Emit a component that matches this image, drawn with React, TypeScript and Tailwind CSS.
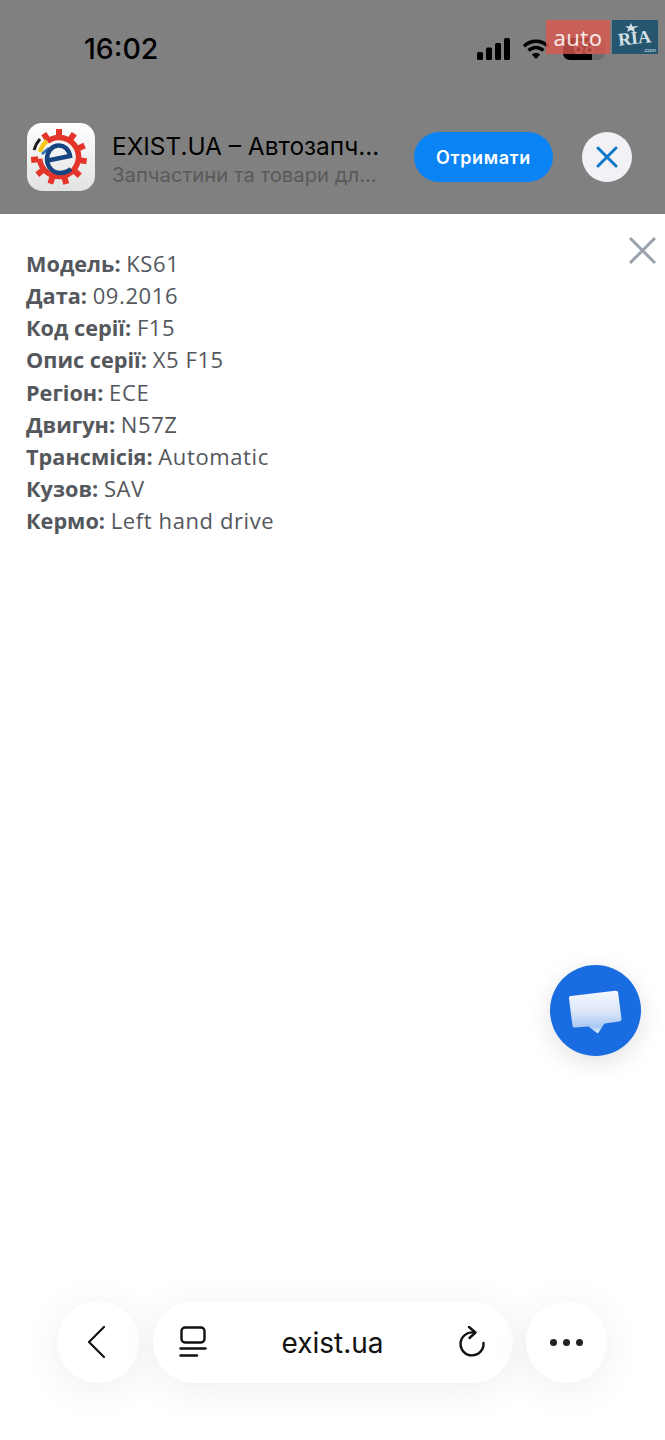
import React from "react";

const specs: [string, string][] = [
  ["Модель:", "KS61"],
  ["Дата:", "09.2016"],
  ["Код серії:", "F15"],
  ["Опис серії:", "X5 F15"],
  ["Регіон:", "ECE"],
  ["Двигун:", "N57Z"],
  ["Трансмісія:", "Automatic"],
  ["Кузов:", "SAV"],
  ["Кермо:", "Left hand drive"],
];

const gearTeeth = [-33, 0, 33, 66, 99, 132, 165, 198, 231, 264];

const AppIcon = () => (
  <div className="w-[68px] h-[68px] rounded-[15px] bg-gradient-to-b from-white to-[#e2e2e2] shrink-0">
    <svg width="68" height="68" viewBox="0 0 68 68" fill="none">
      {/* gear ring, open at the upper left */}
      <path d="M20.3 18.4 A19.5 19.5 0 1 1 12.6 35.7" stroke="#e4352b" strokeWidth="5.5" />
      {gearTeeth.map((a) => (
        <rect key={a} x="29" y="6" width="6" height="7" fill="#e4352b" transform={`rotate(${a} 32 34)`} />
      ))}
      <path d="M7 27 A26 26 0 0 1 13 16" stroke="#1c1c1c" strokeWidth="3" />
      <path d="M13 29 A22 22 0 0 1 20 18" stroke="#f2c81e" strokeWidth="4.5" />
      <path d="M15 31 L22 25" stroke="#2a6fb5" strokeWidth="2.5" />
      {/* the blue "e" mark */}
      <path
        d="M21 37.5 L43 33 C42 26 37 22 31 22.5 C24.5 23 20 29 20 36 C20 44 26 50 33 50 C37 50 41 48.5 44 46"
        stroke="#17457f"
        strokeWidth="4.5"
      />
    </svg>
  </div>
);

const StatusIcons = () => (
  <div className="flex items-center">
    <svg width="34" height="22" viewBox="0 0 34 22" fill="#000">
      <rect x="0" y="14" width="6" height="8" rx="1.5" />
      <rect x="9" y="9.5" width="6" height="12.5" rx="1.5" />
      <rect x="18" y="5" width="6" height="17" rx="1.5" />
      <rect x="27" y="0" width="6" height="22" rx="1.5" />
    </svg>
    <svg className="ml-[11px]" width="28" height="22" viewBox="0 0 28 22" fill="none" stroke="#000" strokeWidth="3.4">
      <path d="M2 8.2 C9 1.5 19 1.5 26 8.2" />
      <path d="M6.5 12.6 C11 8.5 17 8.5 21.5 12.6" />
      <path d="M14 21 L9.8 16.6 C12 14.6 16 14.6 18.2 16.6 Z" fill="#000" stroke="none" />
    </svg>
    <div className="relative ml-[13px] w-[42px] h-[22px] rounded-[7px] bg-[#6c6c6c] overflow-hidden flex items-center justify-center">
      <div className="absolute left-0 top-0 bottom-0 w-[29px] bg-black" />
      <span className="relative font-['Inter',sans-serif] font-semibold text-[17px] text-[#8a8a8a]">68</span>
    </div>
  </div>
);

const Watermark = () => (
  <div className="absolute left-[546px] top-[20px] flex gap-[2px]">
    <div className="w-[64px] h-[34px] bg-[#d9574e]/80 flex items-center justify-center font-['Noto_Sans',sans-serif] text-[22px] tracking-[0.4px] text-white/85">
      auto
    </div>
    <div className="relative w-[46px] h-[34px] bg-[#26566f] flex items-center justify-center font-['Liberation_Serif',serif] font-bold text-[18px] text-[#d5e0e6] overflow-hidden">
      <span className="-rotate-6 mt-[3px]">RIA</span>
      <span className="absolute right-[2px] bottom-0 text-[6px] font-['Liberation_Sans',sans-serif] font-normal leading-[8px]">.com</span>
      <svg className="absolute left-[13px] top-[3px]" width="14" height="10" viewBox="0 0 14 10" fill="#d5e0e6">
        <path d="M6 0 L7.5 3.5 L14 3 L9 5.5 L10 10 L6 7 L2 9 L3.5 5.5 L0 3.5 L4.5 3.2 Z" />
      </svg>
    </div>
  </div>
);

const Toolbar = () => (
  <div className="flex items-center pl-[57px] pb-[57px] font-['Inter',sans-serif]">
    <button className="w-[82px] h-[82px] rounded-full bg-white shadow-[0_6px_40px_rgba(0,0,0,0.07)] flex items-center justify-center">
      <svg className="-ml-[5px]" width="20" height="34" viewBox="0 0 20 34" fill="none" stroke="#111" strokeWidth="2.2" strokeLinecap="round" strokeLinejoin="round">
        <path d="M18 2 L3 17 L18 32" />
      </svg>
    </button>
    <div className="ml-[14px] w-[360px] h-[82px] rounded-full bg-white shadow-[0_6px_40px_rgba(0,0,0,0.07)] flex items-center justify-between pl-[26px] pr-[27px]">
      <svg width="28" height="32" viewBox="0 0 28 32" fill="none" stroke="#111" strokeWidth="2.4" strokeLinecap="round">
        <rect x="2.5" y="1.5" width="23" height="15" rx="3.5" />
        <path d="M1.5 22.5 H26.5" />
        <path d="M1.5 29.5 H18" />
      </svg>
      <span className="text-[28px] text-[#111] mt-[1px]">exist.ua</span>
      <svg width="28" height="32" viewBox="0 0 28 32" fill="none" stroke="#111" strokeWidth="2.4" strokeLinecap="round" strokeLinejoin="round">
        <path d="M15.5 6.5 A11.5 11.5 0 1 0 25.5 17" />
        <path d="M11 1 L17.5 6.5 L11.5 12" />
      </svg>
    </div>
    <button className="ml-[13px] w-[81px] h-[82px] rounded-full bg-white shadow-[0_6px_40px_rgba(0,0,0,0.07)] flex items-center justify-center gap-[6px]">
      <span className="w-[7px] h-[7px] rounded-full bg-[#222]" />
      <span className="w-[7px] h-[7px] rounded-full bg-[#222]" />
      <span className="w-[7px] h-[7px] rounded-full bg-[#222]" />
    </button>
  </div>
);

export default function App() {
  return (
    <div className="relative flex flex-col w-[665px] h-[1440px] bg-white overflow-hidden">
      <header className="h-[214px] shrink-0 bg-[#808080] font-['Inter',sans-serif]">
        <div className="flex items-center justify-between pl-[84px] pr-[60px] pt-[32px] h-[66px]">
          <span className="text-[28.5px] font-medium text-black leading-[34px]">16:02</span>
          <StatusIcons />
        </div>
        <div className="flex items-center pl-[27px] pt-[57px]">
          <AppIcon />
          <div className="ml-[17px] mt-[6px] w-[302px] min-w-0">
            <div className="text-[24.4px] leading-[30px] text-black whitespace-nowrap">EXIST.UA – Автозапч...</div>
            <div className="text-[20.3px] leading-[28px] text-[#5a5a5a] whitespace-nowrap">Запчастини та товари дл...</div>
          </div>
          <button className="w-[139px] h-[50px] rounded-full bg-[#0a84f5] text-white text-[18px] font-semibold tracking-[0.6px]">Отримати</button>
          <button className="ml-[29px] w-[50px] h-[50px] rounded-full bg-[#f2f2f6] flex items-center justify-center">
            <svg width="24" height="24" viewBox="0 0 24 24" fill="none" stroke="#0b78c9" strokeWidth="3" strokeLinecap="round">
              <path d="M3 3 L21 21 M21 3 L3 21" />
            </svg>
          </button>
        </div>
      </header>

      <main className="relative flex-1 flex flex-col">
        <button className="absolute right-[8px] top-[22px]">
          <svg width="29" height="29" viewBox="0 0 29 29" fill="none" stroke="#9ba3ae" strokeWidth="3">
            <path d="M2 2 L27 27 M27 2 L2 27" />
          </svg>
        </button>

        <div className="pl-[26px] pt-[33px] font-['Open_Sans',sans-serif] text-[22px] leading-[32.125px] text-[#54575c]">
          {specs.map(([label, value]) => (
            <div key={label}>
              <span className="font-bold text-[21.7px] leading-none">{label}</span>{" "}
              <span className="tracking-[0.6px]">{value}</span>
            </div>
          ))}
        </div>

        <button className="absolute left-[550px] top-[751px] w-[91px] h-[91px] rounded-full bg-[#1a6de0] shadow-[0_6px_24px_rgba(0,0,0,0.12)] flex items-center justify-center">
          <svg width="56" height="46" viewBox="0 0 56 46" fill="none">
            <defs>
              <linearGradient id="bubbleFill" x1="0" y1="0" x2="0" y2="1">
                <stop offset="0" stopColor="#f6f9fe" />
                <stop offset="0.5" stopColor="#dbe6f8" />
                <stop offset="0.85" stopColor="#a9c8f3" />
                <stop offset="1" stopColor="#e4eefb" />
              </linearGradient>
            </defs>
            <path
              d="M3 8 L47 2.8 C49 2.6 50 3.4 50.2 5.2 L53.4 30.5 C53.6 32.4 52.8 33.2 51 33.4 L36.5 35.5 L30.5 44.5 C30 45.4 29 45.4 28.4 44.6 L20.5 38.5 L7 39.5 C5.4 39.6 4.6 38.8 4.4 37.2 L1 10.5 C0.8 9 1.4 8.2 3 8 Z"
              fill="url(#bubbleFill)"
            />
          </svg>
        </button>

        <div className="mt-auto">
          <Toolbar />
        </div>
      </main>

      <Watermark />
    </div>
  );
}
